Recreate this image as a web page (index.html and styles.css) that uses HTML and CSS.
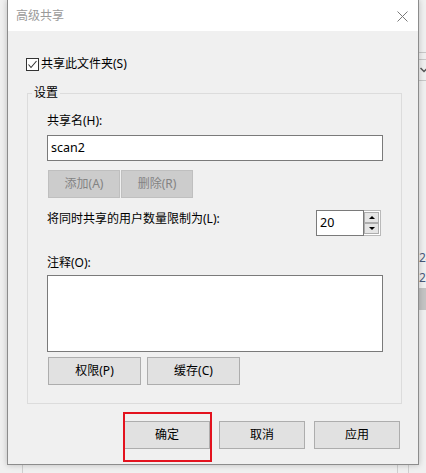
FILE: index.html
```html
<!DOCTYPE html>
<html lang="zh-CN">
<head>
<meta charset="utf-8">
<title>高级共享</title>
<link rel="stylesheet" href="styles.css">
</head>
<body>
<div class="backdrop">
  <div class="bd-hline bd-h1"></div>
  <div class="bd-hline bd-h2"></div>
  <svg class="bd-chev" width="8" height="6" viewBox="0 0 8 6"><path d="M0.5 1 L4 4.5 L7.5 1" fill="none" stroke="#555" stroke-width="1.5"/></svg>
  <div class="bd-hline bd-h3"></div>
  <div class="bd-num bd-n1">24</div>
  <div class="bd-num bd-n2">27</div>
  <div class="bd-scroll"></div>
  <div class="bd-vline bd-v1"></div>
  <div class="bd-vline bd-v2"></div>
  <div class="bd-vline bd-v3"></div>
</div>

<div class="dialog">
  <div class="titlebar">
    <span class="title">高级共享</span>
    <svg class="close" width="11" height="11" viewBox="0 0 11 11"><path d="M0.5 0.5 L10.5 10.5 M10.5 0.5 L0.5 10.5" stroke="#7a7a7a" stroke-width="1" fill="none"/></svg>
  </div>
  <div class="content">
    <div class="check-row">
      <span class="checkbox"><svg width="11" height="11" viewBox="0 0 11 11"><path d="M1.5 5.5 L4 8.5 L9.5 2" fill="none" stroke="#333" stroke-width="1.1"/></svg></span>
      <span class="check-label">共享此文件夹(S)</span>
    </div>

    <div class="group">
      <span class="group-title">设置</span>
      <div class="label">共享名(H):</div>
      <div class="textbox">scan2</div>
      <div class="btn-row btn-row-tight">
        <button class="btn btn-disabled btn-sm">添加(A)</button>
        <button class="btn btn-disabled btn-sm">删除(R)</button>
      </div>
      <div class="limit-row">
        <span class="label limit-label">将同时共享的用户数量限制为(L):</span>
        <div class="spin">
          <div class="spin-text">20</div>
          <div class="spin-btns">
            <div class="spin-btn"><span class="tri-up"></span></div>
            <div class="spin-btn"><span class="tri-down"></span></div>
          </div>
        </div>
      </div>
      <div class="label label-note">注释(O):</div>
      <div class="textarea"></div>
      <div class="btn-row btn-row-wide">
        <button class="btn btn-md">权限(P)</button>
        <button class="btn btn-md">缓存(C)</button>
      </div>
    </div>

    <div class="footer">
      <button class="btn btn-lg">确定</button>
      <button class="btn btn-lg">取消</button>
      <button class="btn btn-lg">应用</button>
    </div>
  </div>
  <div class="highlight"></div>
</div>
</body>
</html>
```

FILE: styles.css
```css
* { box-sizing: border-box; }

html, body {
  margin: 0;
  padding: 0;
}

body {
  width: 426px;
  height: 473px;
  overflow: hidden;
  position: relative;
  background: #efefef;
  font-family: "Noto Sans", "Noto Sans CJK SC", sans-serif;
  font-size: 12px;
  line-height: 16px;
  color: #000;
}

/* ---------- window behind the dialog ---------- */
.backdrop {
  position: absolute;
  inset: 0;
  background: #f0f0f0;
}
.bd-hline {
  position: absolute;
  left: 419px;
  width: 7px;
  height: 1px;
  background: #c8c8c8;
}
.bd-h1 { top: 52px; }
.bd-h2 { top: 59px; }
.bd-h3 { top: 80px; }
.bd-chev {
  position: absolute;
  left: 420px;
  top: 67px;
}
.bd-num {
  position: absolute;
  left: 419px;
  font-family: "Noto Sans", sans-serif;
  font-size: 12px;
  line-height: 14px;
  color: #4a5a7a;
}
.bd-n1 { top: 251px; }
.bd-n2 { top: 271px; }
.bd-scroll {
  position: absolute;
  left: 419px;
  top: 288px;
  width: 7px;
  height: 22px;
  background: #c4c4c4;
}
.bd-vline {
  position: absolute;
  top: 465px;
  width: 1px;
  height: 8px;
  background: #cfcfcf;
}
.bd-v1 { left: 22px; }
.bd-v2 { left: 397px; }
.bd-v3 { left: 408px; }

/* ---------- dialog window ---------- */
.dialog {
  position: relative;
  margin-left: 7px;
  width: 412px;
  height: 465px;
  border: 1px solid #8c8c8c;
  border-top: none;
  background: #f0f0f0;
  box-shadow: 0 0 6px rgba(0, 0, 0, 0.22);
}

.titlebar {
  height: 31px;
  background: #fff;
  display: flex;
  align-items: center;
  justify-content: space-between;
  padding: 0 10px 0 8px;
}
.title {
  color: #9a9a9a;
  font-size: 12px;
}
.close {
  display: block;
  margin-top: 1px;
}

.content {
  padding: 25px 16px 15px 19px;
}

.check-row {
  display: flex;
  align-items: center;
  height: 16px;
  margin-left: -1px;
  gap: 2px;
}
.checkbox {
  width: 13px;
  height: 13px;
  border: 1px solid #333;
  background: #fff;
  display: flex;
  align-items: center;
  justify-content: center;
}
.checkbox svg { display: block; }

.group {
  position: relative;
  margin-top: 21px;
  border: 1px solid #dcdcdc;
  padding: 19px 18px 18px 19px;
}
.group-title {
  position: absolute;
  top: -9px;
  left: 4px;
  padding: 0 2px;
  background: #f0f0f0;
}

.label {
  height: 16px;
  white-space: nowrap;
}

.textbox {
  margin-top: 6px;
  height: 26px;
  border: 1px solid #7a7a7a;
  background: #fff;
  padding: 0 3px;
  line-height: 24px;
  font-size: 12.5px;
}

.btn-row {
  display: flex;
  margin-left: 1px;
}
.btn-row-tight {
  margin-top: 9px;
  gap: 1px;
}
.btn-row-wide {
  margin-top: 5px;
  gap: 6px;
}

.btn {
  font: inherit;
  font-size: 12px;
  height: 28px;
  padding: 0;
  margin: 0;
  border: 1px solid #adadad;
  background: #e1e1e1;
  color: #000;
  line-height: 26px;
}
.btn-disabled {
  background: #cccccc;
  border-color: #bfbfbf;
  color: #838383;
}
.btn-sm { width: 72px; }
.btn-md { width: 93px; }
.btn-lg { width: 86px; }

.limit-row {
  margin-top: 12px;
  display: flex;
  align-items: flex-start;
  justify-content: space-between;
  height: 26px;
}
.limit-label {
  padding-top: 1px;
  height: 17px;
}

.spin {
  display: flex;
  width: 65px;
  height: 26px;
  margin-right: 2px;
}
.spin-text {
  width: 48px;
  height: 26px;
  border: 1px solid #7a7a7a;
  background: #fff;
  padding: 0 3px;
  line-height: 24px;
  font-size: 12.5px;
}
.spin-btns {
  width: 17px;
  height: 26px;
  border: 1px solid #b9b9b9;
  border-left: none;
  background: #fff;
  padding: 1px 1px 1px 0;
  display: flex;
  flex-direction: column;
  gap: 0;
}
.spin-btn {
  flex: 1;
  border: 1px solid #adadad;
  background: #e5e5e5;
  display: flex;
  align-items: center;
  justify-content: center;
}
.tri-up {
  width: 0;
  height: 0;
  border-left: 3px solid transparent;
  border-right: 3px solid transparent;
  border-bottom: 3px solid #000;
}
.tri-down {
  width: 0;
  height: 0;
  border-left: 3px solid transparent;
  border-right: 3px solid transparent;
  border-top: 3px solid #000;
}

.label-note {
  margin-top: 19px;
}

.textarea {
  margin-top: 4px;
  height: 77px;
  border: 1px solid #7a7a7a;
  background: #fff;
}

.footer {
  margin-top: 17px;
  display: flex;
  justify-content: flex-end;
  gap: 9px;
  padding-right: 2px;
}

/* annotation overlay around the OK button */
.highlight {
  position: absolute;
  left: 115px;
  top: 412px;
  width: 89px;
  height: 50px;
  border: 2px solid #e3121e;
  pointer-events: none;
}
```
